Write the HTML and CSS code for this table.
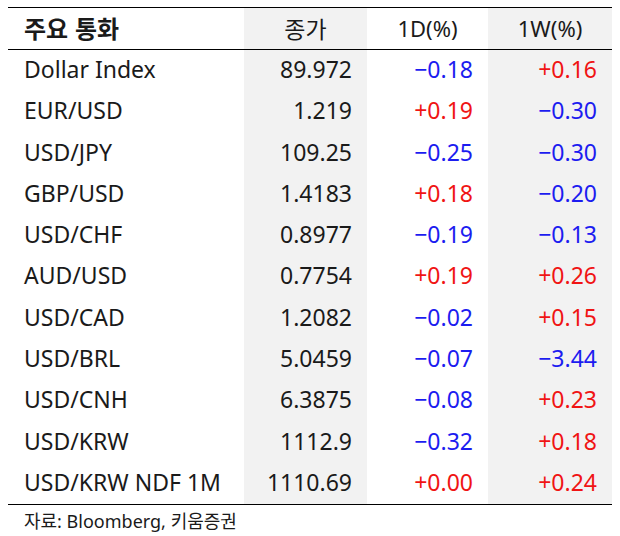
FILE: index.html
```html
<!DOCTYPE html>
<html lang="ko">
<head>
<meta charset="utf-8">
<link rel="stylesheet" href="styles.css">
</head>
<body>
<div class="fx">
  <div class="row head">
    <div class="c name">주요 통화</div>
    <div class="c close">종가</div>
    <div class="c d">1D(%)</div>
    <div class="c w">1W(%)</div>
  </div>
  <div class="row"><div class="c name">Dollar Index</div><div class="c close">89.972</div><div class="c d neg">−0.18</div><div class="c w pos">+0.16</div></div>
  <div class="row"><div class="c name">EUR/USD</div><div class="c close">1.219</div><div class="c d pos">+0.19</div><div class="c w neg">−0.30</div></div>
  <div class="row"><div class="c name">USD/JPY</div><div class="c close">109.25</div><div class="c d neg">−0.25</div><div class="c w neg">−0.30</div></div>
  <div class="row"><div class="c name">GBP/USD</div><div class="c close">1.4183</div><div class="c d pos">+0.18</div><div class="c w neg">−0.20</div></div>
  <div class="row"><div class="c name">USD/CHF</div><div class="c close">0.8977</div><div class="c d neg">−0.19</div><div class="c w neg">−0.13</div></div>
  <div class="row"><div class="c name">AUD/USD</div><div class="c close">0.7754</div><div class="c d pos">+0.19</div><div class="c w pos">+0.26</div></div>
  <div class="row"><div class="c name">USD/CAD</div><div class="c close">1.2082</div><div class="c d neg">−0.02</div><div class="c w pos">+0.15</div></div>
  <div class="row"><div class="c name">USD/BRL</div><div class="c close">5.0459</div><div class="c d neg">−0.07</div><div class="c w neg">−3.44</div></div>
  <div class="row"><div class="c name">USD/CNH</div><div class="c close">6.3875</div><div class="c d neg">−0.08</div><div class="c w pos">+0.23</div></div>
  <div class="row"><div class="c name">USD/KRW</div><div class="c close">1112.9</div><div class="c d neg">−0.32</div><div class="c w pos">+0.18</div></div>
  <div class="row last"><div class="c name">USD/KRW NDF 1M</div><div class="c close">1110.69</div><div class="c d pos">+0.00</div><div class="c w pos">+0.24</div></div>
</div>
<div class="src">자료: Bloomberg, 키움증권</div>
</body>
</html>
```

FILE: styles.css
```css
html, body {
  margin: 0;
  padding: 0;
  background: #ffffff;
}
body {
  padding: 7px 8px 0 8px;
  font-family: "Noto Sans", "Noto Sans CJK KR", sans-serif;
  color: #1a1a1a;
}
.fx {
  width: 604px;
  border-top: 1px solid #000;
  border-bottom: 1px solid #000;
}
.row {
  display: grid;
  grid-template-columns: 236px 123px 121px 124px;
  height: 41.27px;
}
.row.head {
  height: 41px;
  border-bottom: 1px solid #000;
}
.c {
  display: flex;
  align-items: center;
  font-size: 23px;
  padding: 0 15px 3px 15px;
  white-space: nowrap;
}
.name {
  padding-left: 16px;
}
.close, .w {
  background: #f2f2f2;
}
.close, .d, .w {
  justify-content: flex-end;
}
.head .c {
  justify-content: center;
  padding: 0 0 2px 0;
  font-size: 22px;
}
.head .name {
  justify-content: flex-start;
  padding-left: 16px;
  font-weight: 700;
  font-size: 24px;
  font-family: "Noto Sans CJK KR", sans-serif;
}
.head .close {
  font-family: "Noto Sans CJK KR", sans-serif;
  font-size: 23px;
}
.neg { color: #1c1cf0; }
.pos { color: #f01414; }
.src {
  padding: 2px 0 0 16px;
  font-size: 18px;
  color: #1a1a1a;
}
```
